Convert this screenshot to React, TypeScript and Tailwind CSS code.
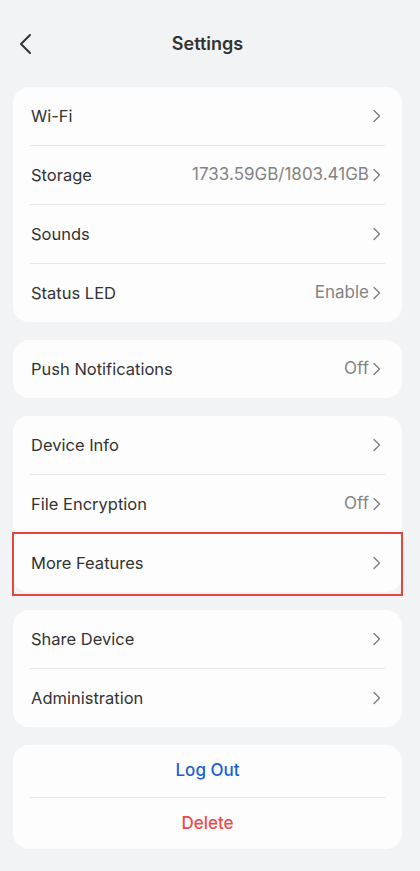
type Row = {
  label: string;
  value?: string;
  highlight?: boolean;
};

const groups: Row[][] = [
  [
    { label: "Wi-Fi" },
    { label: "Storage", value: "1733.59GB/1803.41GB" },
    { label: "Sounds" },
    { label: "Status LED", value: "Enable" },
  ],
  [{ label: "Push Notifications", value: "Off" }],
  [
    { label: "Device Info" },
    { label: "File Encryption", value: "Off" },
    { label: "More Features", highlight: true },
  ],
  [{ label: "Share Device" }, { label: "Administration" }],
];

function Chevron() {
  return (
    <svg
      width="9"
      height="14"
      viewBox="0 0 9 14"
      fill="none"
      stroke="#7a7a7a"
      strokeWidth={1.3}
      strokeLinecap="round"
      strokeLinejoin="round"
      className="ml-[3px]"
    >
      <path d="M2 1.5l5.5 5.5L2 12.5" />
    </svg>
  );
}

function SettingRow({ row, last }: { row: Row; last: boolean }) {
  return (
    <>
      <div className="relative flex h-[58px] items-center justify-between pl-[18px] pr-[21px]">
        <span className="text-[16.5px] text-[#333333]">{row.label}</span>
        <span className="flex items-center">
          {row.value && (
            <span className="text-[17px] text-[#838383]">{row.value}</span>
          )}
          <Chevron />
        </span>

        {/* annotation outline */}
        {row.highlight && (
          <div className="pointer-events-none absolute -top-[2px] -bottom-[4px] -left-[1px] -right-[1px] border-2 border-[#e5473d]" />
        )}
      </div>
      {!last && <div className="mx-[17px] h-px bg-[#e6e6e6]" />}
    </>
  );
}

export default function App() {
  return (
    <div
      className="min-h-screen bg-[#f2f3f5] pb-6"
      style={{ fontFamily: "Inter, 'Noto Sans', sans-serif" }}
    >
      {/* Header */}
      <div className="relative flex h-[87px] items-center justify-center pb-[1px] pl-[13px] pr-[18px]">
        <svg
          width="14"
          height="22"
          viewBox="0 0 14 22"
          fill="none"
          stroke="#333333"
          strokeWidth={2}
          strokeLinecap="round"
          strokeLinejoin="round"
          className="absolute left-[19px] top-[33px]"
        >
          <path d="M11 2L2 11l9 9" />
        </svg>
        <h1 className="text-[18px] font-semibold text-[#333333]">Settings</h1>
      </div>

      <div className="flex flex-col gap-[18px] pl-[13px] pr-[18px]">
        {groups.map((group, gi) => (
          <div key={gi} className="rounded-[16px] bg-[#fdfdfd]">
            {group.map((row, ri) => (
              <SettingRow
                key={row.label}
                row={row}
                last={ri === group.length - 1}
              />
            ))}
          </div>
        ))}

        <div className="rounded-[16px] bg-[#fdfdfd]">
          <div className="flex h-[52px] items-center justify-center text-[17px] font-medium text-[#1a5dd8]">
            Log Out
          </div>
          <div className="mx-[17px] h-px bg-[#e6e6e6]" />
          <div className="flex h-[51px] items-center justify-center text-[17px] font-medium text-[#f04a4a]">
            Delete
          </div>
        </div>
      </div>
    </div>
  );
}
